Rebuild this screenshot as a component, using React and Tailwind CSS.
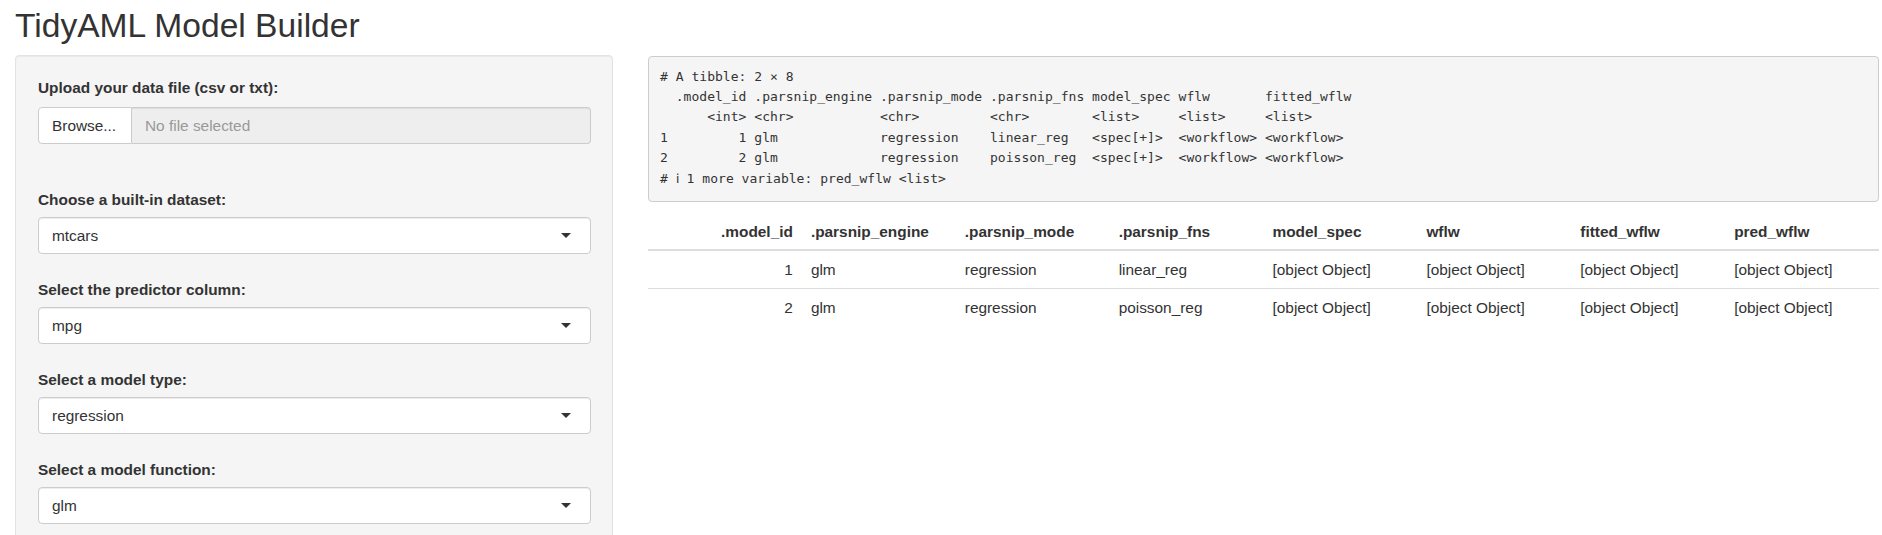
import React from 'react';

const preLines = [
  '# A tibble: 2 × 8',
  '  .model_id .parsnip_engine .parsnip_mode .parsnip_fns model_spec wflw       fitted_wflw',
  '      <int> <chr>           <chr>         <chr>        <list>     <list>     <list>',
  '1         1 glm             regression    linear_reg   <spec[+]>  <workflow> <workflow>',
  '2         2 glm             regression    poisson_reg  <spec[+]>  <workflow> <workflow>',
  '# ℹ 1 more variable: pred_wflw <list>',
];

const columns = ['.model_id', '.parsnip_engine', '.parsnip_mode', '.parsnip_fns', 'model_spec', 'wflw', 'fitted_wflw', 'pred_wflw'];

const rows = [
  ['1', 'glm', 'regression', 'linear_reg', '[object Object]', '[object Object]', '[object Object]', '[object Object]'],
  ['2', 'glm', 'regression', 'poisson_reg', '[object Object]', '[object Object]', '[object Object]', '[object Object]'],
];

// selectize-like dropdown
const SelectBox = ({ label, value }) => (
  <div className="mt-[25px] first:mt-0">
    <label className="block font-bold text-[15.4px] leading-[22px]">{label}</label>
    <div className="mt-[6px] h-[37px] flex items-center justify-between bg-white border border-[#ccc] rounded-[4px] pl-[13px] pr-[19px] shadow-[inset_0_1px_1px_rgba(0,0,0,0.075)]">
      <span className="text-[15.4px]">{value}</span>
      <span className="w-0 h-0 border-x-[5px] border-x-transparent border-t-[5px] border-t-[#333]"></span>
    </div>
  </div>
);

const App = () => {
  return (
    <div className="h-[535px] overflow-hidden bg-white text-[#333] font-['Liberation_Sans',Arial,sans-serif]">
      <h2 className="pl-[15px] pt-[8px] text-[33.6px] leading-[36px] font-normal">TidyAML Model Builder</h2>

      <div className="flex mt-[11px]">
        {/* Sidebar */}
        <div className="ml-[15px] w-[598px] shrink-0 h-[600px] bg-[#f5f5f5] border border-[#e3e3e3] rounded-[4px] shadow-[inset_0_1px_1px_rgba(0,0,0,0.05)] pt-[21px] pl-[22px] pr-[21px]">
          <label className="block font-bold text-[15.4px] leading-[22px]">Upload your data file (csv or txt):</label>
          <div className="mt-[8px] flex h-[37px] text-[15.4px]">
            <div className="w-[94px] shrink-0 bg-white border border-[#ccc] rounded-l-[4px] flex items-center pl-[13px]">Browse...</div>
            <div className="flex-1 bg-[#eee] border border-l-0 border-[#ccc] rounded-r-[4px] flex items-center pl-[13px] text-[#999] shadow-[inset_0_1px_1px_rgba(0,0,0,0.075)]">No file selected</div>
          </div>

          <div className="mt-[45px]">
            <SelectBox label="Choose a built-in dataset:" value="mtcars" />
            <SelectBox label="Select the predictor column:" value="mpg" />
            <SelectBox label="Select a model type:" value="regression" />
            <SelectBox label="Select a model function:" value="glm" />
          </div>
        </div>

        {/* Main panel */}
        <div className="ml-[35px] mr-[3px] flex-1 min-w-0">
          <pre className="mt-[1px] bg-[#f5f5f5] border border-[#ccc] rounded-[4px] pt-[9.5px] pb-[12.5px] px-[11px] font-['DejaVu_Sans_Mono',monospace] text-[13px] leading-[20.4px] tracking-[0.03px] text-[#333] whitespace-pre">
            {preLines.join('\n')}
          </pre>

          <div className="mt-[11px] text-[15.4px]">
            <div className="grid grid-cols-8 h-[38px] items-center border-b-2 border-[#ddd] font-bold">
              {columns.map((c, i) => (
                <div key={c} className={i === 0 ? 'text-right pr-[9px]' : 'pl-[9px]'}>{c}</div>
              ))}
            </div>
            {rows.map((r, ri) => (
              <div key={ri} className={`grid grid-cols-8 items-center ${ri === 0 ? 'h-[37px]' : 'h-[38px] border-t border-[#ddd]'}`}>
                {r.map((v, i) => (
                  <div key={i} className={i === 0 ? 'text-right pr-[9px]' : 'pl-[9px]'}>{v}</div>
                ))}
              </div>
            ))}
          </div>
        </div>
      </div>
    </div>
  );
};

export default App;
